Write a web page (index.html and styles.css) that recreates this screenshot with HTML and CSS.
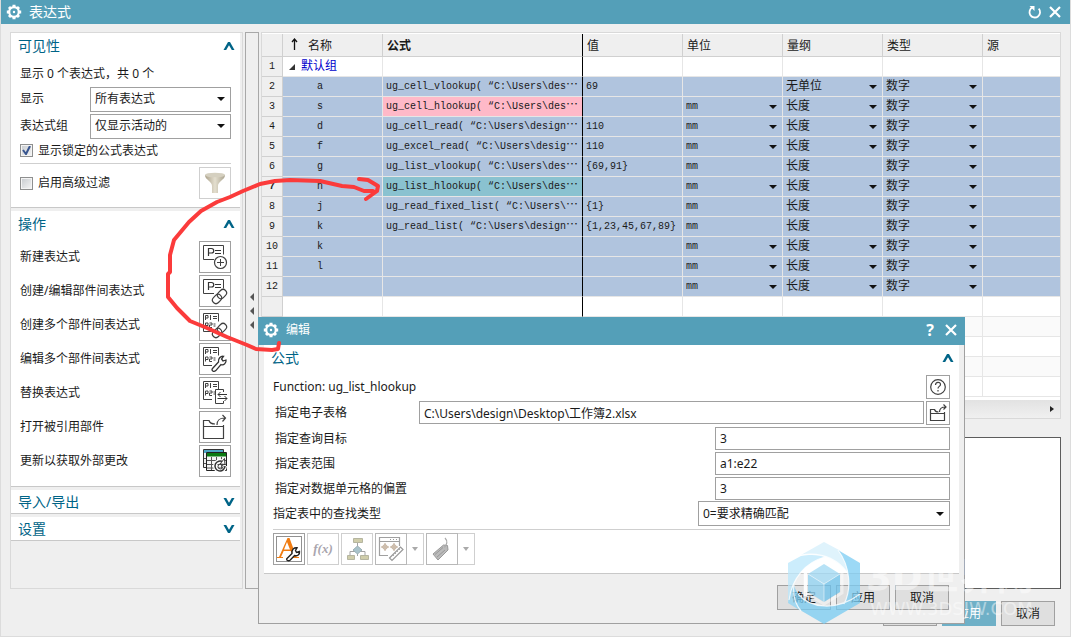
FILE: index.html
```
<!DOCTYPE html>
<html lang="zh-CN">
<head>
<meta charset="utf-8">
<title>表达式</title>
<link rel="stylesheet" href="styles.css">
</head>
<body>
<svg class="defs" width="0" height="0" aria-hidden="true">
  <symbol id="gear" viewBox="0 0 16 16"><circle cx="8" cy="8" r="4.800" fill="none" stroke="#fff" stroke-width="2.200"/><circle cx="8" cy="8" r="1.200" fill="#fff"/><path d="M8 .8v2.200M8 13v2.200M.8 8H3M13 8h2.200M3 3l1.500 1.500M11.500 11.500L13 13M13 3l-1.500 1.500M3 13l1.500-1.500" stroke="#fff" stroke-width="3"/></symbol>
  <symbol id="up" viewBox="0 0 12 10"><path d="M.5 9h2.700L6 4.200 8.800 9h2.700L7 1H5z" fill="#006487"/></symbol>
  <symbol id="down" viewBox="0 0 12 10"><path d="M.5 1h2.700L6 5.800 8.800 1h2.700L7 9H5z" fill="#006487"/></symbol>
  <symbol id="close" viewBox="0 0 12 12"><path d="M1 1l10 10M11 1L1 11" stroke="#fff" stroke-width="2.200"/></symbol>
  <symbol id="pbox" viewBox="0 0 30 30"><path d="M14 17.500H3.500v-14h20v9" fill="none" stroke="#404040"/><path d="M8.500 14V6.500h3a2 2 0 0 1 0 4.500h-3M15 8.500h6M15 11.500h6" fill="none" stroke="#333" stroke-width="1.200"/></symbol>
  <symbol id="p12" viewBox="0 0 30 30"><path d="M12 21.500H3.500v-18h15v8" fill="none" stroke="#404040"/><path d="M5.500 10V5.500h2.500v2.500H5.500M10.500 5v5M13 6.500h4M13 8.500h4M5.500 17.500V13h2.500v2.500H5.500M9.500 13h2.500v2h-2.500v2.500H12M13.500 14h2M13.500 16h2" fill="none" stroke="#404040"/></symbol>
  <symbol id="link" viewBox="0 0 30 30"><g transform="rotate(-45 19.500 20.500)" fill="none" stroke="#404040" stroke-width="1.200"><rect x="11" y="17" width="10" height="7" rx="3.500" fill="#fff"/><rect x="18" y="17" width="10" height="7" rx="3.500"/></g></symbol>
  <symbol id="wrench" viewBox="0 0 30 30"><path d="M12.500 24.500l6-6.500c-.6-3.600 2-6 5-5.700l-2 2.700 1.500 2 3-1c.5 3-2.200 5.500-5 4.600l-5.200 6c-2 1.800-5 0-3.300-2.100z" fill="#fff" stroke="#333" stroke-width="1.300"/></symbol>
  <symbol id="folder" viewBox="0 0 30 30"><path d="M23.500 13v13.500h-20V8.500h5.500c1 3.500 4 3.500 6 3.500M3.500 14.500h20" fill="none" stroke="#404040" stroke-width="1.200"/><path d="M17 13c0-5 2-7 8-7M22.500 3l3 3-3 3.500" fill="none" stroke="#404040" stroke-width="1.200"/></symbol>
</svg>

<div class="window">
  <header class="titlebar">
    <svg width="16" height="16"><use href="#gear"/></svg>
    <h1>表达式</h1>
    <button class="bare" aria-label="重置"><svg width="14" height="14" viewBox="0 0 14 14"><path d="M4.500 2.400a5.300 5.300 0 1 0 6.200 1.200" fill="none" stroke="#fff" stroke-width="1.800"/><path d="M1.500 1h5v5z" fill="#fff"/></svg></button>
    <button class="bare" aria-label="关闭"><svg width="12" height="12"><use href="#close"/></svg></button>
  </header>

  <main class="content">
    <aside class="sidebar">
      <section class="group visibility">
        <h2>可见性<svg width="12" height="10"><use href="#up"/></svg></h2>
        <p>显示 0 个表达式，共 0 个</p>
        <div class="field"><label for="show">显示</label><select id="show"><option>所有表达式</option></select></div>
        <div class="field"><label for="grp">表达式组</label><select id="grp"><option>仅显示活动的</option></select></div>
        <label class="check"><input type="checkbox" checked>显示锁定的公式表达式</label>
        <hr>
        <div class="action"><label class="check"><input type="checkbox">启用高级过滤</label>
          <button class="icon dim" aria-label="过滤"><svg width="30" height="30" viewBox="0 0 30 30"><defs><linearGradient id="fg"><stop offset="0" stop-color="#aaa08a"/><stop offset=".5" stop-color="#e4dfcf"/><stop offset="1" stop-color="#aaa38f"/></linearGradient></defs><path d="M5 7c0 5 7 6 7 11v7h6v-7c0-5 7-6 7-11z" fill="url(#fg)"/><ellipse cx="15" cy="7" rx="10" ry="2.300" fill="#d5d0c0"/></svg></button></div>
      </section>
      <section class="group actions">
        <h2>操作<svg width="12" height="10"><use href="#up"/></svg></h2>
        <div class="action"><span>新建表达式</span><button class="icon" aria-label="新建表达式"><svg width="30" height="30"><use href="#pbox"/><circle cx="20.500" cy="20.500" r="6" fill="#fff" stroke="#404040" stroke-width="1.200"/><path d="M17 20.500h7M20.500 17v7" stroke="#404040"/></svg></button></div>
        <div class="action"><span>创建/编辑部件间表达式</span><button class="icon" aria-label="创建/编辑部件间表达式"><svg width="30" height="30"><use href="#pbox"/><use href="#link"/></svg></button></div>
        <div class="action"><span>创建多个部件间表达式</span><button class="icon" aria-label="创建多个部件间表达式"><svg width="30" height="30"><use href="#p12"/><use href="#link"/></svg></button></div>
        <div class="action"><span>编辑多个部件间表达式</span><button class="icon" aria-label="编辑多个部件间表达式"><svg width="30" height="30"><use href="#p12"/><use href="#wrench"/></svg></button></div>
        <div class="action"><span>替换表达式</span><button class="icon" aria-label="替换表达式"><svg width="30" height="30"><use href="#p12"/><path d="M23.500 14v-2.500h-8v14h8V23" fill="#fff" stroke="#404040"/><path d="M27 16.500h-9M20.500 14l-2.500 2.500 2.500 2.500M17.500 20.500H27M24.500 18l2.500 2.500-2.500 2.500" fill="none" stroke="#333"/></svg></button></div>
        <div class="action"><span>打开被引用部件</span><button class="icon" aria-label="打开被引用部件"><svg width="30" height="30"><use href="#folder"/></svg></button></div>
        <div class="action"><span>更新以获取外部更改</span><button class="icon" aria-label="更新以获取外部更改"><svg width="30" height="30" viewBox="0 0 30 30"><path d="M3.500 3.500h20v18h-20z" fill="#f2f2f2" stroke="#333"/><path d="M4 4h19v3H4z" fill="#4fa5c4"/><path d="M4 12.500h4M4 17.500h4" stroke="#555"/><path d="M6.500 6.500h20v18h-20z" fill="#f5f5f5" stroke="#222"/><path d="M7 7h19v3.500H7z" fill="#0b7a12"/><path d="M7 14.500h19M7 18.500h19M7 22h19M11.500 11v13M16.500 11v13M21.500 11v13" stroke="#555"/><path d="M23 16a5 5 0 1 0 2 4" fill="none" stroke="#fff" stroke-width="4"/><path d="M23 16a5 5 0 1 0 2 4" fill="none" stroke="#333" stroke-width="1.500"/><path d="M20 18l5 .5-.5-6z" fill="#fff" stroke="#333"/><circle cx="20.500" cy="20.500" r="2.500" fill="none" stroke="#444"/></svg></button></div>
      </section>
      <section class="group"><h2>导入/导出<svg width="12" height="10"><use href="#down"/></svg></h2></section>
      <section class="group"><h2>设置<svg width="12" height="10"><use href="#down"/></svg></h2></section>
    </aside>
    <div class="splitter"><i></i><i></i><i></i></div>

    <div class="right">
      <div class="gridbox">
        <table class="grid">
          <colgroup><col class="c-num"><col class="c-std"><col class="c-wide"><col class="c-std"><col class="c-std"><col class="c-std"><col class="c-std"><col></colgroup>
          <thead><tr><th></th><th><svg class="sort" width="7" height="12" viewBox="0 0 7 12"><path d="M3.500 12V1M1 4l2.500-3L6 4" fill="none" stroke="#111" stroke-width="1.300"/></svg>名称</th><th class="strong">公式</th><th>值</th><th>单位</th><th>量纲</th><th>类型</th><th>源</th></tr></thead>
          <tbody>
            <tr><th>1</th><td class="root"><svg width="6" height="6" viewBox="0 0 6 6"><path d="M6 0v6H0z" fill="#333"/></svg>默认组</td><td></td><td></td><td></td><td></td><td></td><td></td></tr>
            <tr class="sel"><th>2</th><td>a</td><td>ug_cell_vlookup( “C:\Users\des<b>…</b></td><td>69</td><td></td><td><select aria-label="量纲"><option>无单位</option></select></td><td><select aria-label="类型"><option>数字</option></select></td><td></td></tr>
            <tr class="sel"><th>3</th><td>s</td><td class="pink">ug_cell_hlookup( “C:\Users\des<b>…</b></td><td></td><td><select aria-label="单位"><option>mm</option></select></td><td><select aria-label="量纲"><option>长度</option></select></td><td><select aria-label="类型"><option>数字</option></select></td><td></td></tr>
            <tr class="sel"><th>4</th><td>d</td><td>ug_cell_read( “C:\Users\design<b>…</b></td><td>110</td><td><select aria-label="单位"><option>mm</option></select></td><td><select aria-label="量纲"><option>长度</option></select></td><td><select aria-label="类型"><option>数字</option></select></td><td></td></tr>
            <tr class="sel"><th>5</th><td>f</td><td>ug_excel_read( “C:\Users\desig<b>…</b></td><td>110</td><td><select aria-label="单位"><option>mm</option></select></td><td><select aria-label="量纲"><option>长度</option></select></td><td><select aria-label="类型"><option>数字</option></select></td><td></td></tr>
            <tr class="sel"><th>6</th><td>g</td><td>ug_list_vlookup( “C:\Users\des<b>…</b></td><td>{69,91}</td><td><small>mm</small></td><td>长度</td><td><select aria-label="类型"><option>数字</option></select></td><td></td></tr>
            <tr class="sel"><th class="strong">7</th><td>h</td><td class="teal">ug_list_hlookup( “C:\Users\des<b>…</b></td><td></td><td><select aria-label="单位"><option>mm</option></select></td><td><select aria-label="量纲"><option>长度</option></select></td><td><select aria-label="类型"><option>数字</option></select></td><td></td></tr>
            <tr class="sel"><th>8</th><td>j</td><td>ug_read_fixed_list( “C:\Users\<b>…</b></td><td>{1}</td><td><small>mm</small></td><td>长度</td><td><select aria-label="类型"><option>数字</option></select></td><td></td></tr>
            <tr class="sel"><th>9</th><td>k</td><td>ug_read_list( “C:\Users\design<b>…</b></td><td>{1,23,45,67,89}</td><td><small>mm</small></td><td>长度</td><td><select aria-label="类型"><option>数字</option></select></td><td></td></tr>
            <tr class="sel"><th>10</th><td>k</td><td></td><td></td><td><select aria-label="单位"><option>mm</option></select></td><td><select aria-label="量纲"><option>长度</option></select></td><td><select aria-label="类型"><option>数字</option></select></td><td></td></tr>
            <tr class="sel"><th>11</th><td>l</td><td></td><td></td><td><select aria-label="单位"><option>mm</option></select></td><td><select aria-label="量纲"><option>长度</option></select></td><td><select aria-label="类型"><option>数字</option></select></td><td></td></tr>
            <tr class="sel"><th>12</th><td></td><td></td><td></td><td><select aria-label="单位"><option>mm</option></select></td><td><select aria-label="量纲"><option>长度</option></select></td><td><select aria-label="类型"><option>数字</option></select></td><td></td></tr>
            <tr><th></th><td></td><td></td><td></td><td></td><td></td><td></td><td></td></tr>
            <tr class="alt"><th></th><td></td><td></td><td></td><td></td><td></td><td></td><td></td></tr>
            <tr><th></th><td></td><td></td><td></td><td></td><td></td><td></td><td></td></tr>
            <tr class="alt"><th></th><td></td><td></td><td></td><td></td><td></td><td></td><td></td></tr>
            <tr><th></th><td></td><td></td><td></td><td></td><td></td><td></td><td></td></tr>
          </tbody>
        </table>
        <div class="hscroll"><svg width="5" height="8" viewBox="0 0 5 8"><path d="M1 1l4 3-4 3z" fill="#222"/></svg></div>
      </div>
      <div class="preview"></div>
    </div>
  </main>

  <footer class="buttons"><button>确定</button><button class="primary">应用</button><button>取消</button></footer>
</div>

<div class="dialog" role="dialog" aria-label="编辑">
  <header class="titlebar">
    <svg width="16" height="16"><use href="#gear"/></svg>
    <h1>编辑</h1>
    <button class="bare help">?</button>
    <button class="bare" aria-label="关闭"><svg width="12" height="12"><use href="#close"/></svg></button>
  </header>
  <section class="group form">
    <h2>公式<svg width="12" height="10"><use href="#up"/></svg></h2>
    <div class="line outer"><span>Function: ug_list_hlookup</span><button class="icon small" aria-label="帮助"><svg width="22" height="22" viewBox="0 0 22 22"><circle cx="11" cy="11" r="7.300" fill="none" stroke="#404040" stroke-width="1.200"/><path d="M8.500 9c0-3.500 5-3.500 5-.6 0 2-2.500 2-2.500 4.100M11 14v1.500" fill="none" stroke="#404040" stroke-width="1.200"/></svg></button></div>
    <div class="line"><label for="xls">指定电子表格</label><input id="xls" class="path" value="C:\Users\design\Desktop\工作簿2.xlsx"><button class="icon small" aria-label="浏览"><svg width="22" height="22" viewBox="0 0 22 22"><path d="M17.500 10v8.500h-14V7.500h4c.5 2 2 2.500 4 2.500M3.500 11.500h14" fill="none" stroke="#404040" stroke-width="1.200"/><path d="M12.500 10c0-3.500 1.500-5 6-5M16.500 2.500L19 5l-2.500 2.500" fill="none" stroke="#404040" stroke-width="1.200"/></svg></button></div>
    <div class="line"><label for="q">指定查询目标</label><input id="q" value="3"></div>
    <div class="line"><label for="r">指定表范围</label><input id="r" value="a1:e22"></div>
    <div class="line"><label for="o">指定对数据单元格的偏置</label><input id="o" value="3"></div>
    <div class="line outer"><label for="t">指定表中的查找类型</label><select id="t"><option>0=要求精确匹配</option></select></div>
    <hr>
    <div class="tools">
      <button class="icon" aria-label="编辑文本"><svg width="30" height="30" viewBox="0 0 30 30"><rect x="2.500" y="2.500" width="25" height="25" fill="none" stroke="#222" stroke-dasharray="1 1"/><path d="M13.500 4h2l7 19H25v1h-8v-1h2l-2.300-6h-7L7 23h2v1H3v-1h2zM13 8l-3 7.500h6z" fill="#f07c12"/><path d="M13 24.500l5-5c-.6-4 2-6 5-5.700l-1.500 2.700 1 2 3-1c.5 3-2.200 5-5 4l-4.200 4.500c-2 1.800-4.500 0-3.300-1.500z" fill="#fff" stroke="#222" stroke-width="1.400"/></svg></button>
      <button class="icon dim fx">f(x)</button>
      <button class="icon dim" aria-label="结构"><svg width="30" height="30" viewBox="0 0 30 30"><path d="M15.500 8v14M8 22v-4.500h15V22" fill="none" stroke="#a3a3a3"/><path d="M11.500 4.500h9v4h-9zM5.500 21.500h7v4h-7zM18.500 21.500h8v4h-8z" fill="#cfcdaa" stroke="#b5b5a0"/><path d="M15.500 12l4.500 4-4.500 4-4.500-4z" fill="#a9c3cb" stroke="#9bb0b5"/></svg></button>
      <div class="split"><button class="icon mid" aria-label="测量"><svg width="30" height="30" viewBox="0 0 30 30" fill="none"><path d="M12 21.500H3.500v-18h20V12M3.500 7.500h20" stroke="#a0a0a0" stroke-width="1.200"/><path d="M14 5.500h1M17 5.500h1M20 5.500h1" stroke="#999"/><path d="M5 13h8M9 9v8M14 13h8M18 9v8" stroke="#bda892"/><circle cx="9" cy="13" r="2.200" stroke="#bda892"/><circle cx="18" cy="13" r="2.200" stroke="#bda892"/><path d="M13.500 24L24.500 13l2.500 2.500-11 11z" fill="#fff" stroke="#999" stroke-width="1.200"/><path d="M17 21l1 1M19 19l1 1M21 17l1 1M23 15l1 1" stroke="#aaa"/></svg></button><button class="icon dim drop" aria-label="更多测量"><svg width="6" height="4"><path d="M0 0h6L3 4z" fill="#aaa"/></svg></button></div>
      <div class="split"><button class="icon mid" aria-label="标签"><svg width="30" height="30" viewBox="0 0 30 30"><path d="M6 20L16.500 11l4 .5.5 4.500L11 26z" fill="#bbb" stroke="#999"/><path d="M8 20.500l8-7M10 23l8-7" stroke="#999"/><path d="M17.500 13.500c2-3 4-6 .5-9.500" fill="none" stroke="#aaa" stroke-width="1.200"/></svg></button><button class="icon dim drop" aria-label="更多标签"><svg width="6" height="4"><path d="M0 0h6L3 4z" fill="#aaa"/></svg></button></div>
    </div>
  </section>
  <footer class="buttons"><button>确定</button><button>应用</button><button>取消</button></footer>
</div>

<div class="watermark">
  <svg width="72" height="82" viewBox="0 0 72 82">
    <g class="blades">
      <path d="M13 13L36 0l15 8c6 7 8 14 8 22C48 16 32 10 13 13z" fill="#d5effc"/>
      <path d="M0 21l13-7c10-2 18-1 24 1C18 20 4 36 1 58l-1 3z" fill="#bbe7fb"/>
      <path d="M50 8l22 13v30c-5 6-10 9-16 11 8-15 6-38-6-54z" fill="#7ccdf3"/>
      <path d="M72 52v9L36 82 12 68c-5-6-7-16-6-25 4 18 34 32 66 9z" fill="#77cbf2"/>
      <path d="M0 61c1-9 3-14 6-18-1 10 1 19 7 26z" fill="#8fd6f6"/>
      <path d="M20 32l16-10 16 10-16 10z" fill="#9fd9f4"/>
      <path d="M20 32l16 10v18l-16-10z" fill="#8dd1f1"/>
      <path d="M52 32L36 42v18l16-10z" fill="#6cc2ec"/>
    </g>
    <path d="M13 13c19-3 35 3 46 17M1 58C4 36 18 20 37 15M50 8c12 16 14 39 6 54M72 52C48 70 22 66 10 52M13 69C7 62 5 52 6 43" fill="none" stroke="#fff" stroke-width="1.200" opacity=".8"/>
    <path d="M17.500 54V30L36 19l18 11" fill="none" stroke="#fff" stroke-width="3.500" opacity=".9"/>
    <path d="M54 30v21L36 62 17.500 51" fill="none" stroke="#fff" stroke-width="3" opacity=".45"/>
    <path d="M20 32l16 10 16-10M36 42v18" fill="none" stroke="#fff" opacity=".5"/>
  </svg>
  <div class="wm-text"><div class="wm-name">3D世界网</div><div class="wm-url">WWW.3DSJW.COM</div></div>
</div>

<svg class="stroke" width="400" height="360" viewBox="0 0 400 360" aria-hidden="true"><path d="M279 343l-1 6-6 1-16-1-9-4-20-8-20-9-17-7-13-13-9-11v-23l2-2v-17l4-15 15-18 12-11 16-9 13-5 13-6 17-7 15-3 15-1 30 1 22 5 12 1 10 4h9M359 179l9 1 10 6-1 5-11 8"/></svg>
</body>
</html>
```
FILE: styles.css
```
* { box-sizing: border-box; }
body {
  margin: 0;
  position: relative;
  overflow: hidden;
  font-family: "Noto Sans", "Noto Sans CJK SC", sans-serif;
  font-size: 12px;
  line-height: 16px;
  color: #1a1a1a;
  background: #efefef;
}
button, input, select { font: inherit; color: inherit; margin: 0; border-radius: 0; }
h1, h2, p { margin: 0; font-weight: normal; }
hr { margin: 0; border: 0; border-top: 1px solid #cfcfcf; }
svg { display: block; flex: none; }
.defs { position: absolute; }

.window {
  min-height: 100vh;
  display: flex;
  flex-direction: column;
  border: 1px solid #dcdcdc;
  border-top: 0;
}
.titlebar {
  display: flex;
  align-items: center;
  gap: 7px;
  height: 24px;
  padding: 0 9px 0 5px;
  background: #549fb8;
  color: #fff;
}
.titlebar h1 { flex: 1; font-size: 14px; line-height: 20px; }
.bare { padding: 0; border: 0; background: none; color: #fff; }

.content { flex: 1; display: flex; padding: 8px 9px 0; }
.sidebar { width: 233px; padding-right: 2px; border: 1px solid #d9d9d9; }
.group { background: #fff; border-bottom: 1px solid #c8c8c8; padding: 0 9px; margin-bottom: 3px; }
.group h2 {
  display: flex;
  align-items: center;
  justify-content: space-between;
  height: 23px;
  margin: 0 -4px 0 -2px;
  font-size: 14px;
  line-height: 20px;
  color: #006487;
}
.visibility { display: flex; flex-direction: column; gap: 3px; padding-top: 1px; padding-bottom: 8px; }
.visibility p { padding: 4px 0 6px; line-height: 20px; margin-bottom: -6px; }
.field { display: flex; align-items: center; height: 24px; }
.field label { width: 70px; }
select {
  appearance: none;
  border: 1px solid #a0a0a0;
  outline: 0;
  background: #fff url("data:image/svg+xml,%3Csvg xmlns='http://www.w3.org/2000/svg' width='8' height='4'%3E%3Cpath d='M0 0h8L4 4z' fill='%23111'/%3E%3C/svg%3E") no-repeat right 5px center;
}
.field select { flex: 1; height: 25px; padding: 0 4px; }
.check { display: flex; align-items: center; gap: 5px; height: 19px; }
.check input {
  appearance: none;
  width: 13px;
  height: 13px;
  border: 1px solid #8e8f8f;
  outline: 1px solid #f4f4f4;
  outline-offset: -2px;
  background: linear-gradient(135deg, #c6cace, #f6f6f6);
}
.check input:checked {
  background: url("data:image/svg+xml,%3Csvg xmlns='http://www.w3.org/2000/svg' width='11' height='11'%3E%3Cpath d='M2 5l3 4 4-8' fill='none' stroke='%2338558f' stroke-width='2'/%3E%3C/svg%3E"), linear-gradient(135deg, #c6cace, #f6f6f6);
}
.actions { padding-top: 1px; padding-bottom: 8px; }
.actions h2 { margin-bottom: 5px; }
.action { display: flex; align-items: center; justify-content: space-between; }
.actions .action { height: 34px; }
.icon {
  display: flex;
  align-items: center;
  justify-content: center;
  width: 32px;
  height: 32px;
  padding: 0;
  border: 1px solid #a0a0a0;
  background: #fff;
}
.dim { border-color: #cfcfcf; }
.mid { border-color: #b8b8b8; }
.splitter {
  width: 14px;
  margin: 0 2px 0 2px;
  border: 1px solid #a8a8a8;
  display: flex;
  flex-direction: column;
  align-items: center;
  justify-content: center;
  gap: 6px;
}
.splitter i { border: 4px solid transparent; border-left: 0; border-right-color: #555; }

.right { flex: 1; min-width: 0; display: flex; flex-direction: column; gap: 18px; }
.gridbox { border: 1px solid #d9d9d9; padding-top: 1px; background: #fff; }
.grid { width: 100%; table-layout: fixed; border-collapse: separate; border-spacing: 0; font-family: "Liberation Mono", "Noto Sans CJK SC", monospace; }
.c-num { width: 21px; }
.c-std { width: 100px; }
.c-wide { width: 200px; }
.grid th, .grid td {
  height: 20px;
  padding: 0 3px;
  border-right: 1px solid #e6e6e6;
  border-bottom: 1px solid #e6e6e6;
  font-weight: normal;
  text-align: left;
  white-space: nowrap;
  overflow: hidden;
  line-height: 18px;
}
.grid th { background: #efefef; border-color: #d0d0d0; }
.grid thead th { height: 23px; padding: 4px 4px 0; }
.grid tbody th { padding: 0; text-align: center; font-size: 10px; }
.grid .strong { font-weight: bold; }
.grid th:last-child, .grid td:last-child { border-right: 0; }
.grid th:nth-child(3), .grid td:nth-child(3) { border-right-color: #000; }
.grid td:nth-child(2) { padding-left: 34px; }
.grid td.root { padding-left: 6px; color: #00c; }
.root svg { display: inline-block; margin-right: 6px; }
.sort { display: inline-block; margin: 0 10px 0 4px; }
.sel td { background: #b0c4de; }
.sel td:nth-child(-n+4) { font-size: 10px; }
.grid b { font: 12px/0 "Noto Sans CJK SC", sans-serif; }
.grid small { font-size: 10px; }
.grid .pink { background: #ffb9c8; }
.grid .teal { background: #8ac2d0; }
.alt td { background: #fafafa; }
.grid select { display: block; width: 100%; height: 18px; padding: 0; border: 0; background-color: transparent; background-position: right 2px center; }
.sel td:nth-child(5) select { font-size: 10px; }
.hscroll { display: flex; align-items: center; justify-content: flex-end; height: 18px; margin-top: 3px; padding-right: 6px; background: linear-gradient(#e2e2e2, #f0f0f0); }
.preview { flex: 1; border: 1px solid #5c5c5c; background: #fff; }

.buttons { display: flex; justify-content: flex-end; gap: 5px; padding: 12px 15px 10px; }
.buttons button { width: 54px; height: 25px; padding: 0; border: 1px solid #a0a0a0; background: #dfdfdf; }
.buttons .primary { border-color: #6fb0c7; background: #6fb0c7; color: #fff; }

.dialog {
  position: absolute;
  left: 258px;
  top: 317px;
  width: 707px;
  background: #efefef;
  border: 1px solid #a0a0a0;
  border-top: 0;
}
.dialog .titlebar { height: 28px; margin: 0 -1px; padding: 0 8px 2px 5px; }
.dialog .titlebar h1 { font-size: 12px; }
.dialog .help { font-weight: bold; font-size: 16px; margin-right: 4px; }
.form { margin: 0 5px; padding: 0 9px 8px; display: flex; flex-direction: column; }
.form h2 { height: 26px; margin-bottom: 3px; }
.line { display: flex; align-items: center; gap: 2px; height: 25px; padding-left: 2px; margin-bottom: 1px; }
.line + .line + .line { margin-bottom: 0; }
.line label, .line span { flex: 1; }
.outer { padding-left: 0; }
.line input { width: 235px; height: 23px; padding: 0 4px; border: 1px solid #a0a0a0; background: #fff; outline: 0; }
.line .path { width: 505px; }
.line select { width: 252px; height: 25px; padding: 0 4px; }
.small { width: 24px; height: 24px; }
.form hr { margin: 3px 0; }
.tools { display: flex; gap: 2px; }
.split { display: flex; }
.drop { width: 17px; border-left: 0; }
.fx { font: italic bold 13px "Liberation Serif", serif; color: #a9a5ae; }
.dialog .buttons { padding: 11px 15px 13px; }

.watermark { position: absolute; left: 788px; top: 542px; display: flex; gap: 6px; pointer-events: none; }
.blades, .watermark > svg { mix-blend-mode: normal; }
.blades { opacity: .75; }
.wm-text { padding-top: 18px; color: #fff; opacity: .45; white-space: nowrap; }
.wm-name { font-family: "DejaVu Sans", "Noto Sans CJK SC", sans-serif; font-weight: bold; font-size: 37px; line-height: 36px; }
.wm-url { margin: 4px 0 0 4px; font-family: "DejaVu Sans", sans-serif; font-size: 18px; line-height: 18px; }
.stroke { position: absolute; left: 0; top: 0; pointer-events: none; fill: none; stroke: #fb3b3b; stroke-width: 4px; stroke-linecap: round; stroke-linejoin: round; }
```
